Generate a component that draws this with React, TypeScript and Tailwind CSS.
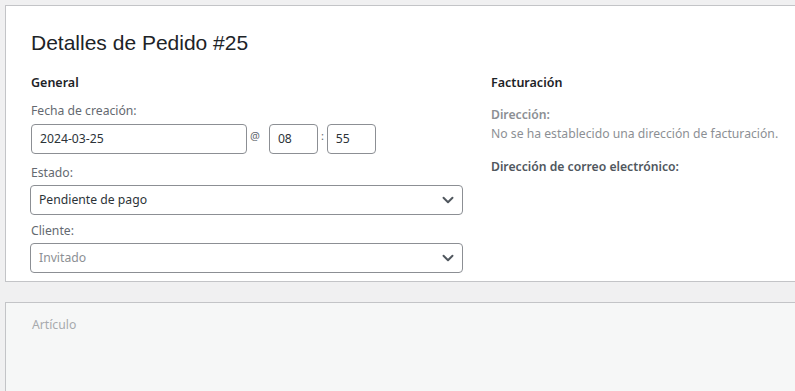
import { ChevronDown } from 'lucide-react';

const body = { fontFamily: '"Noto Sans", "Open Sans", sans-serif' };

function SelectBox({ value, muted }: { value: string; muted?: boolean }) {
  return (
    <div className="flex h-[30px] w-[433px] items-center justify-between rounded-[4px] border border-[#8c8f94] bg-white pl-[8px] pr-[5px]">
      <span className={muted ? 'text-[#8c8f94]' : 'text-[#2c3338]'}>{value}</span>
      <ChevronDown size={18} strokeWidth={2.6} className="text-[#50575e]" />
    </div>
  );
}

export default function App() {
  return (
    <div className="h-[391px] w-[795px] overflow-hidden bg-[#f0f0f1] pl-[5px] pt-[5px] text-[12.2px]" style={body}>
      <div className="w-[820px] border border-[#c3c4c7] bg-white pb-[8px] pl-[25px] pt-[22px]">
        <h2 className="text-[21px] leading-[30px] text-[#1d2327]" style={{ fontFamily: '"Liberation Sans", Arial, sans-serif' }}>
          Detalles de Pedido #25
        </h2>
        <div className="mt-[15px] flex">
          <div className="w-[460px]">
            <h3 className="text-[12.5px] font-semibold leading-[20px] text-[#1d2327]">General</h3>
            <label className="mt-[9px] block leading-[18px] text-[#646970]">Fecha de creación:</label>
            <div className="mt-[4px] flex items-start">
              <div className="flex h-[30px] w-[216px] items-center rounded-[4px] border border-[#8c8f94] px-[8px] text-[#2c3338]">2024-03-25</div>
              <span className="ml-[3px] mr-[9px] mt-[4px] text-[11px] leading-[16px] text-[#646970]">@</span>
              <div className="flex h-[30px] w-[49px] items-center rounded-[4px] border border-[#8c8f94] px-[8px] text-[#2c3338]">08</div>
              <span className="mx-[3px] mt-[4px] text-[11px] leading-[16px] text-[#646970]">:</span>
              <div className="flex h-[30px] w-[49px] items-center rounded-[4px] border border-[#8c8f94] px-[8px] text-[#2c3338]">55</div>
            </div>
            <label className="mt-[10px] block leading-[18px] text-[#646970]">Estado:</label>
            <div className="mt-[3px] -ml-px">
              <SelectBox value="Pendiente de pago" />
            </div>
            <label className="mt-[7px] block leading-[18px] text-[#646970]">Cliente:</label>
            <div className="mt-[3px] -ml-px">
              <SelectBox value="Invitado" muted />
            </div>
          </div>
          <div className="w-[320px]">
            <h3 className="text-[12.5px] font-semibold leading-[20px] text-[#1d2327]">Facturación</h3>
            <div className="mt-[13px] font-semibold leading-[18px] text-[#8c8f94]">Dirección:</div>
            <div className="leading-[19px] text-[#8c8f94]">No se ha establecido una dirección de facturación.</div>
            <div className="mt-[15px] font-semibold leading-[18px] text-[#50575e]">Dirección de correo electrónico:</div>
          </div>
        </div>
      </div>
      <div className="mt-[20px] h-[120px] w-[820px] border border-[#c3c4c7] bg-[#f6f7f7] pl-[26px] pt-[13px]">
        <span className="text-[#a7aaad]">Artículo</span>
      </div>
    </div>
  );
}
